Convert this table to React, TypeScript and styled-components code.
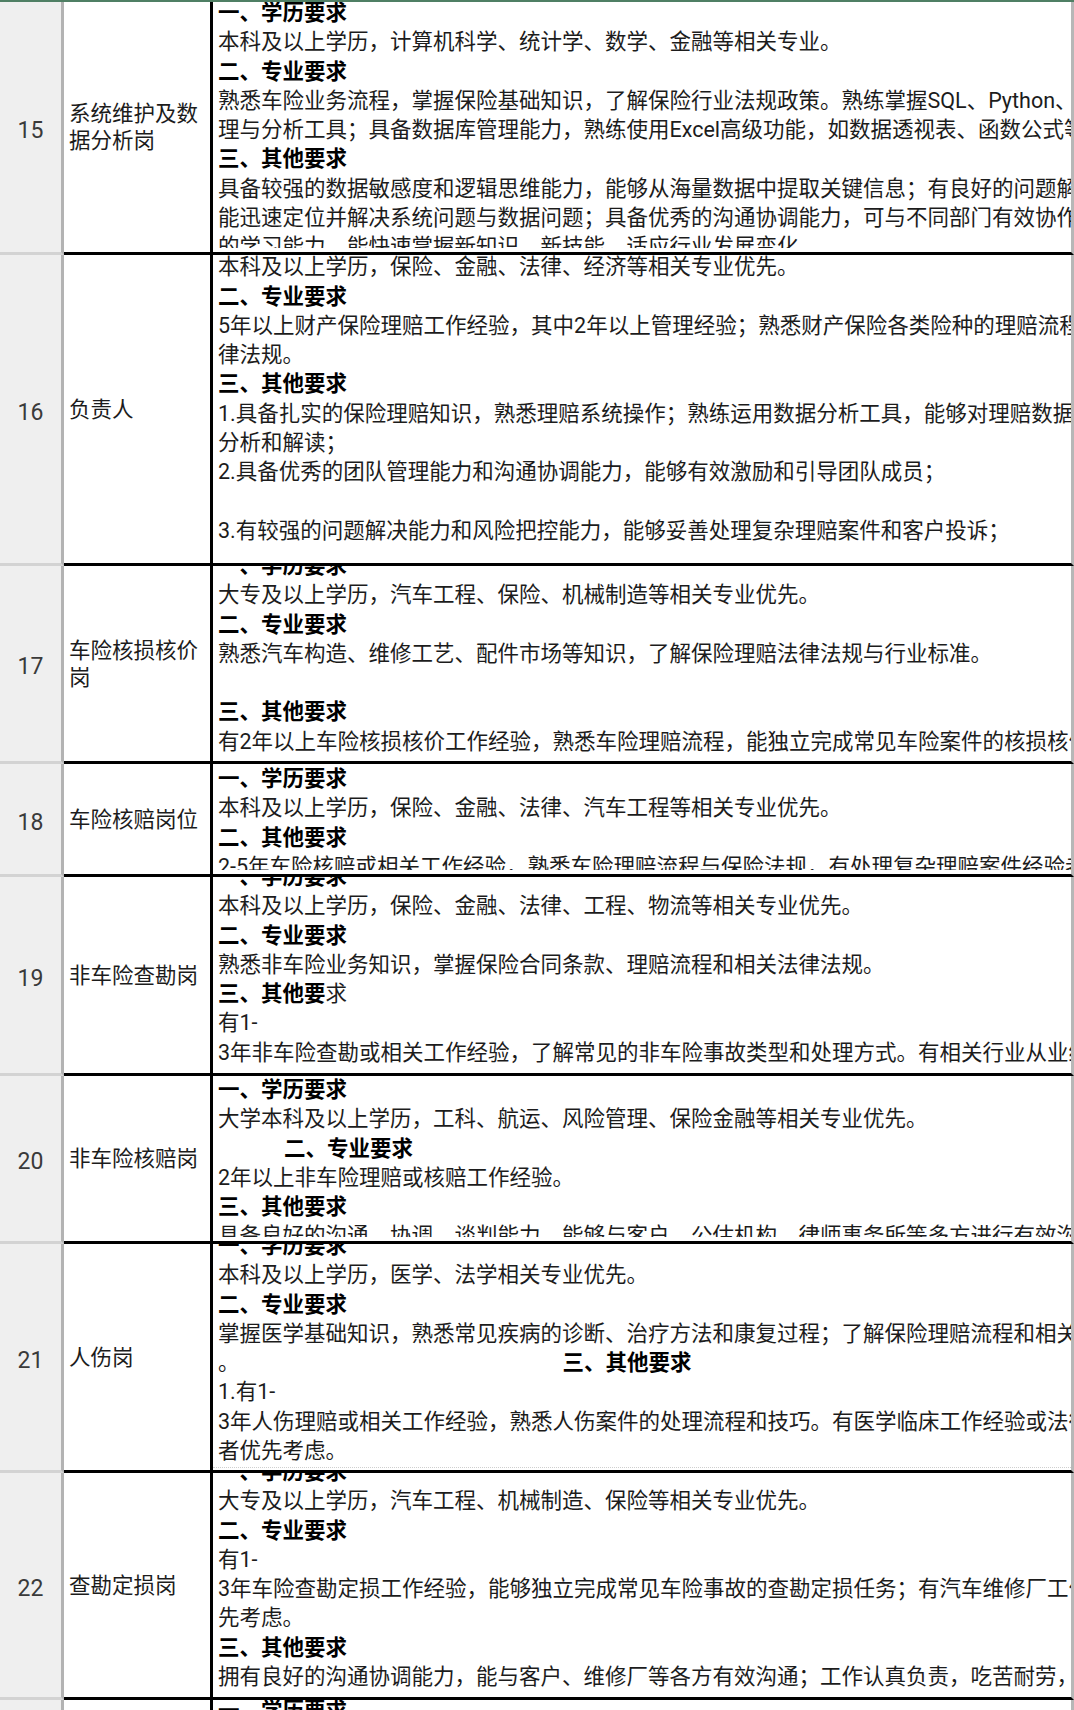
import React from "react";
import styled, { createGlobalStyle } from "styled-components";

const Global = createGlobalStyle`
  html, body { margin: 0; padding: 0; background: #ffffff; }
  body { overflow: hidden; }
`;

const Sheet = styled.div`
  width: 1074px;
  height: 1710px;
  overflow: hidden;
  display: flex;
  flex-direction: column;
  border-top: 2px solid #4f7f64;
  box-sizing: border-box;
  font-family: Roboto, "Noto Sans CJK SC", sans-serif;
  color: #1c1c1c;
`;

const Row = styled.div<{ $h: number }>`
  display: flex;
  flex: none;
  height: ${(p) => p.$h}px;
`;

const NumCell = styled.div`
  width: 64px;
  flex: none;
  box-sizing: border-box;
  background: #efefef;
  border-right: 3px solid #b3b3b3;
  border-bottom: 3px solid #d3d3d3;
  display: flex;
  align-items: center;
  justify-content: center;
  padding-top: 6px;
  font-family: Roboto, sans-serif;
  font-size: 23px;
  color: #3a3a3a;
`;

const NameCell = styled.div`
  width: 149px;
  flex: none;
  box-sizing: border-box;
  border-right: 3px solid #000;
  border-bottom: 3px solid #000;
  display: flex;
  align-items: center;
  padding-left: 5px;
  font-size: 21.5px;
  line-height: 27px;
  color: #1c1c1c;
`;

const ContentCell = styled.div<{ $dotted?: boolean }>`
  flex: 1;
  min-width: 0;
  position: relative;
  box-sizing: border-box;
  display: flex;
  flex-direction: column;
  border-bottom: 3px solid #000;
  border-right: 3px solid #b7b7b7;
  padding-bottom: 4px;
  &::after {
    content: "";
    display: ${(p) => (p.$dotted ? "block" : "none")};
    position: absolute;
    left: 0;
    right: 0;
    bottom: 2px;
    border-bottom: 1px dotted #cfcfcf;
  }
`;

const Viewport = styled.div`
  flex: 1;
  min-height: 0;
  overflow: hidden;
  padding-left: 5px;
`;

const Lines = styled.div<{ $shift: number }>`
  margin-top: ${(p) => p.$shift}px;
`;

const Line = styled.div<{ $indent?: number }>`
  white-space: nowrap;
  height: 29.25px;
  line-height: 29.25px;
  font-size: 21.5px;
  padding-left: ${(p) => p.$indent || 0}px;
`;

const Seg = styled.span<{ $bold?: boolean; $gap?: number }>`
  font-weight: ${(p) => (p.$bold ? 700 : 400)};
  color: ${(p) => (p.$bold ? "#000" : "#1c1c1c")};
  margin-left: ${(p) => p.$gap || 0}px;
`;

type S = { t: string; b?: boolean; gap?: number };
type L = { segs: S[]; indent?: number };

const B = (t: string, indent?: number): L => ({ segs: [{ t, b: true }], indent });
const N = (t: string): L => ({ segs: [{ t }] });
const E: L = { segs: [{ t: "" }] };

type RowData = {
  num: string;
  name: string;
  h: number;
  shift: number;
  dotted?: boolean;
  lines: L[];
};

const rows: RowData[] = [
  {
    num: "15",
    name: "系统维护及数据分析岗",
    h: 253,
    shift: -4,
    lines: [
      B("一、学历要求"),
      N("本科及以上学历，计算机科学、统计学、数学、金融等相关专业。"),
      B("二、专业要求"),
      N("熟悉车险业务流程，掌握保险基础知识，了解保险行业法规政策。熟练掌握SQL、Python、R等数据处"),
      N("理与分析工具；具备数据库管理能力，熟练使用Excel高级功能，如数据透视表、函数公式等。"),
      B("三、其他要求"),
      N("具备较强的数据敏感度和逻辑思维能力，能够从海量数据中提取关键信息；有良好的问题解决能力，"),
      N("能迅速定位并解决系统问题与数据问题；具备优秀的沟通协调能力，可与不同部门有效协作；有较强"),
      N("的学习能力，能快速掌握新知识、新技能，适应行业发展变化。"),
    ],
  },
  {
    num: "16",
    name: "负责人",
    h: 311,
    shift: -32,
    lines: [
      B("一、学历要求"),
      N("本科及以上学历，保险、金融、法律、经济等相关专业优先。"),
      B("二、专业要求"),
      N("5年以上财产保险理赔工作经验，其中2年以上管理经验；熟悉财产保险各类险种的理赔流程和相关法"),
      N("律法规。"),
      B("三、其他要求"),
      N("1.具备扎实的保险理赔知识，熟悉理赔系统操作；熟练运用数据分析工具，能够对理赔数据进行"),
      N("分析和解读；"),
      N("2.具备优秀的团队管理能力和沟通协调能力，能够有效激励和引导团队成员；"),
      E,
      N("3.有较强的问题解决能力和风险把控能力，能够妥善处理复杂理赔案件和客户投诉；"),
    ],
  },
  {
    num: "17",
    name: "车险核损核价岗",
    h: 198,
    shift: -15,
    lines: [
      B("一、学历要求"),
      N("大专及以上学历，汽车工程、保险、机械制造等相关专业优先。"),
      B("二、专业要求"),
      N("熟悉汽车构造、维修工艺、配件市场等知识，了解保险理赔法律法规与行业标准。"),
      E,
      B("三、其他要求"),
      N("有2年以上车险核损核价工作经验，熟悉车险理赔流程，能独立完成常见车险案件的核损核价工作。"),
    ],
  },
  {
    num: "18",
    name: "车险核赔岗位",
    h: 113,
    shift: 0,
    lines: [
      B("一、学历要求"),
      N("本科及以上学历，保险、金融、法律、汽车工程等相关专业优先。"),
      B("二、其他要求"),
      N("2-5年车险核赔或相关工作经验，熟悉车险理赔流程与保险法规，有处理复杂理赔案件经验者优先。"),
    ],
  },
  {
    num: "19",
    name: "非车险查勘岗",
    h: 199,
    shift: -15,
    lines: [
      B("一、学历要求"),
      N("本科及以上学历，保险、金融、法律、工程、物流等相关专业优先。"),
      B("二、专业要求"),
      N("熟悉非车险业务知识，掌握保险合同条款、理赔流程和相关法律法规。"),
      { segs: [{ t: "三、其他要", b: true }, { t: "求" }] },
      N("有1-"),
      N("3年非车险查勘或相关工作经验，了解常见的非车险事故类型和处理方式。有相关行业从业经验者优先。"),
    ],
  },
  {
    num: "20",
    name: "非车险核赔岗",
    h: 168,
    shift: -1,
    lines: [
      B("一、学历要求"),
      N("大学本科及以上学历，工科、航运、风险管理、保险金融等相关专业优先。"),
      B("二、专业要求", 66),
      N("2年以上非车险理赔或核赔工作经验。"),
      B("三、其他要求"),
      N("具备良好的沟通、协调、谈判能力，能够与客户、公估机构、律师事务所等多方进行有效沟通。"),
    ],
  },
  {
    num: "21",
    name: "人伤岗",
    h: 229,
    shift: -13,
    dotted: true,
    lines: [
      B("一、学历要求"),
      N("本科及以上学历，医学、法学相关专业优先。"),
      B("二、专业要求"),
      N("掌握医学基础知识，熟悉常见疾病的诊断、治疗方法和康复过程；了解保险理赔流程和相关法律法规"),
      { segs: [{ t: "。" }, { t: "三、其他要求", b: true, gap: 323 }] },
      N("1.有1-"),
      N("3年人伤理赔或相关工作经验，熟悉人伤案件的处理流程和技巧。有医学临床工作经验或法律从业经验"),
      N("者优先考虑。"),
    ],
  },
  {
    num: "22",
    name: "查勘定损岗",
    h: 227,
    shift: -16,
    lines: [
      B("一、学历要求"),
      N("大专及以上学历，汽车工程、机械制造、保险等相关专业优先。"),
      B("二、专业要求"),
      N("有1-"),
      N("3年车险查勘定损工作经验，能够独立完成常见车险事故的查勘定损任务；有汽车维修厂工作经验者优"),
      N("先考虑。"),
      B("三、其他要求"),
      N("拥有良好的沟通协调能力，能与客户、维修厂等各方有效沟通；工作认真负责，吃苦耐劳，能适应"),
    ],
  },
  {
    num: "",
    name: "",
    h: 120,
    shift: -4,
    lines: [B("一、学历要求"), N("")],
  },
];

export default function App() {
  return (
    <>
      <Global />
      <Sheet>
        {rows.map((r, i) => (
          <Row key={i} $h={r.h}>
            <NumCell>{r.num}</NumCell>
            <NameCell>{r.name}</NameCell>
            <ContentCell $dotted={r.dotted}>
              <Viewport>
                <Lines $shift={r.shift}>
                  {r.lines.map((l, j) => (
                    <Line key={j} $indent={l.indent}>
                      {l.segs.map((s, k) => (
                        <Seg key={k} $bold={s.b} $gap={s.gap}>
                          {s.t}
                        </Seg>
                      ))}
                    </Line>
                  ))}
                </Lines>
              </Viewport>
            </ContentCell>
          </Row>
        ))}
      </Sheet>
    </>
  );
}
